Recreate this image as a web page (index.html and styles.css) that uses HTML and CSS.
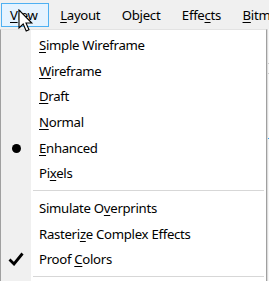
FILE: index.html
```html
<!DOCTYPE html>
<html>
<head>
<meta charset="utf-8">
<link rel="stylesheet" href="styles.css">
</head>
<body>
<div class="menubar">
  <div class="mb-item active"><u>V</u>iew</div>
  <div class="mb-item"><u>L</u>ayout</div>
  <div class="mb-item">Object</div>
  <div class="mb-item">Effe<u>c</u>ts</div>
  <div class="mb-item"><u>B</u>itmaps</div>
</div>
<div class="area">
  <div class="menu">
    <div class="item"><span class="gutter"></span><span class="label"><u>S</u>imple Wireframe</span></div>
    <div class="item"><span class="gutter"></span><span class="label"><u>W</u>ireframe</span></div>
    <div class="item"><span class="gutter"></span><span class="label"><u>D</u>raft</span></div>
    <div class="item"><span class="gutter"></span><span class="label"><u>N</u>ormal</span></div>
    <div class="item"><span class="gutter"><span class="dot"></span></span><span class="label"><u>E</u>nhanced</span></div>
    <div class="item"><span class="gutter"></span><span class="label">Pi<u>x</u>els</span></div>
    <div class="sep"><span class="gutter"></span><span class="line"></span></div>
    <div class="item"><span class="gutter"></span><span class="label">Simulate O<u>v</u>erprints</span></div>
    <div class="item"><span class="gutter"></span><span class="label">Rasteri<u>z</u>e Complex Effects</span></div>
    <div class="item"><span class="gutter"><svg class="check" width="16" height="14" viewBox="0 0 16 14"><path d="M1.5 7.5 L6 12 L14.5 1.5" fill="none" stroke="#000" stroke-width="2.8"/></svg></span><span class="label">Proof <u>C</u>olors</span></div>
    <div class="sep"><span class="gutter"></span><span class="line"></span></div>
    <div class="item"><span class="gutter"></span><span class="label">&nbsp;</span></div>
  </div>
  <div class="strip">
    <div class="s1"></div>
    <div class="s2"></div>
    <div class="s3"></div>
  </div>
</div>
<svg class="cursor" width="16" height="24" viewBox="0 0 16 24"><path d="M1 1 L1 19 L5.2 15 L8.2 22 L11 20.8 L8 14 L13.8 14 Z" fill="#fff" stroke="#000" stroke-width="1.1" stroke-linejoin="miter"/></svg>
</body>
</html>
```
FILE: styles.css
```css
html, body {
  margin: 0;
  padding: 0;
  width: 269px;
  height: 281px;
  overflow: hidden;
  background: #f0f0f0;
  font-family: "Noto Sans", "Open Sans", sans-serif;
  font-size: 13.2px;
  letter-spacing: -0.3px;
  color: #000;
  position: relative;
}
u {
  text-decoration: underline;
  text-decoration-thickness: 1px;
  text-underline-offset: 2px;
}
.menubar {
  height: 29px;
  display: flex;
  align-items: flex-start;
  gap: 2.5px;
  padding-left: 1px;
  background: #f0f0f0;
  white-space: nowrap;
  overflow: hidden;
}
.mb-item {
  flex: none;
  padding: 0 9px 0 8px;
  border: 1px solid transparent;
  box-sizing: border-box;
  height: 24px;
  line-height: 23px;
  margin-top: 3px;
}
.mb-item.active {
  background: #e5f3ff;
  border-color: #4eb0f2;
  padding-right: 10px;
}
.area {
  display: flex;
  height: 252px;
}
.menu {
  width: 265px;
  flex: none;
  border-left: 1px solid #a0a0a0;
  border-right: 1px solid #a0a0a0;
  border-top: 1px solid #e3e3e3;
  background: #fff;
  padding-top: 2.5px;
  position: relative;
}
.menu::before {
  content: "";
  position: absolute;
  left: 0;
  top: 0;
  bottom: 0;
  width: 30px;
  background: #f0f0f0;
}
.item {
  display: flex;
  height: 25.6px;
  align-items: center;
  position: relative;
  white-space: nowrap;
}
.gutter {
  width: 30px;
  flex: none;
  display: flex;
  align-items: center;
  justify-content: center;
  align-self: stretch;
}
.label {
  padding-left: 8px;
  line-height: 20px;
}
.dot {
  width: 9px;
  height: 9px;
  border-radius: 50%;
  background: #000;
  margin-top: 2px;
}
.check {
  display: block;
}
.sep {
  display: flex;
  height: 9.4px;
  align-items: center;
  position: relative;
}
.sep .line {
  flex: 1;
  height: 1px;
  margin: 0 2px 0 2px;
  background: #d7d7d7;
}
.strip {
  flex: 1;
  background: #f7f7f7;
  border-left: 1px solid #dcdcdc;
  display: flex;
  flex-direction: column;
}
.s1 { height: 34px; border-bottom: 1px solid #c8c8c8; }
.s2 { height: 9px; border-bottom: 1px solid #c8c8c8; }
.s3 { height: 64px; border-bottom: 1px solid #33a0f0; }
.cursor {
  position: absolute;
  left: 18px;
  top: 9px;
}
```
